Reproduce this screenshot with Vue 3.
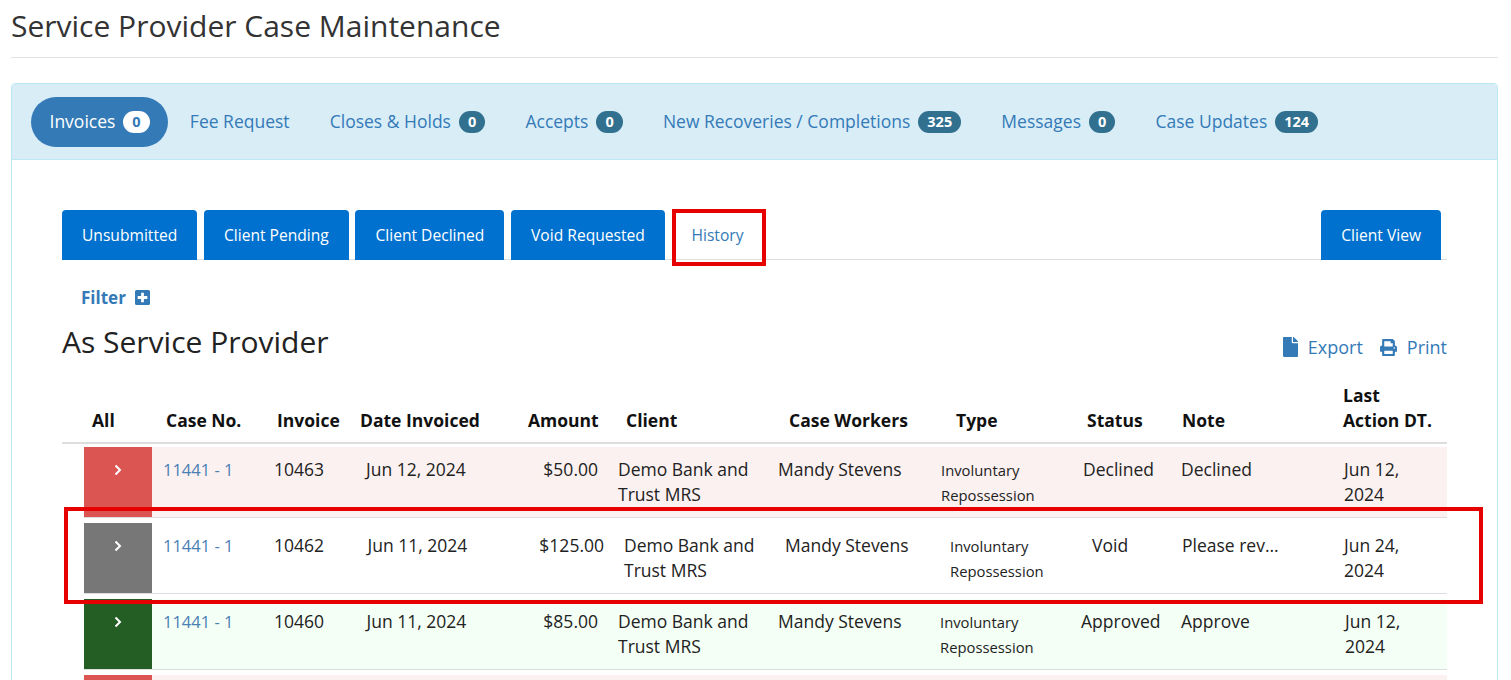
<script setup>
const nav = [
  { label: 'Invoices', count: '0', active: true },
  { label: 'Fee Request' },
  { label: 'Closes & Holds', count: '0' },
  { label: 'Accepts', count: '0' },
  { label: 'New Recoveries / Completions', count: '325' },
  { label: 'Messages', count: '0' },
  { label: 'Case Updates', count: '124' },
]
const tabs = ['Unsubmitted', 'Client Pending', 'Client Declined', 'Void Requested']
const headers = [
  { t: 'All', x: 30 }, { t: 'Case No.', x: 104 }, { t: 'Invoice', x: 215 }, { t: 'Date Invoiced', x: 298 },
  { t: 'Amount', x: 466 }, { t: 'Client', x: 564 }, { t: 'Case Workers', x: 727 }, { t: 'Type', x: 894 },
  { t: 'Status', x: 1025 }, { t: 'Note', x: 1120 }, { t: 'Last Action DT.', x: 1281 },
]
const rows = [
  { cls: 'red', cols: [100, 212, 304, 536, 556, 716, 879, 1021, 1119, 1282], inv: '10463', date: 'Jun 12, 2024', amt: '$50.00', status: 'Declined', note: 'Declined', last: 'Jun 12, 2024' },
  { cls: 'gray', cols: [100, 212, 305.500, 542, 562, 723, 888, 1030, 1120, 1282], inv: '10462', date: 'Jun 11, 2024', amt: '$125.00', status: 'Void', note: 'Please rev...', last: 'Jun 24, 2024' },
  { cls: 'green', cols: [100, 212, 304.500, 536, 556, 716, 878, 1019, 1119, 1283], inv: '10460', date: 'Jun 11, 2024', amt: '$85.00', status: 'Approved', note: 'Approve', last: 'Jun 12, 2024' },
]
function headTemplate(xs) {
  const out = []
  let prev = 30
  xs.forEach((x) => { out.push(`${x - prev}px`); prev = x })
  out.push('1fr')
  return out.join(' ')
}
function rowCols(r) {
  const [cs, inv, date, amtEnd, client, work, type, status, note, last] = r.cols
  const tracks = [68, inv - cs + 10, date - inv, 100, client - date - 100, work - client, type - work, status - type, note - status, last - note]
  return { gridTemplateColumns: tracks.map((t) => `${t}px`).join(' ') + ' 1fr' }
}
const headCols = { gridTemplateColumns: headTemplate(headers.slice(1).map((h) => h.x)) }
</script>

<template>
  <div class="page">
    <h1 class="title">Service Provider Case Maintenance</h1>
    <div class="panel">
      <ul class="nav">
        <li v-for="n in nav" :key="n.label" class="nav-item" :class="{ active: n.active }">
          <span>{{ n.label }}</span>
          <span v-if="n.count" class="badge">{{ n.count }}</span>
        </li>
      </ul>
      <div class="body">
        <div class="tabs">
          <span v-for="t in tabs" :key="t" class="tab">{{ t }}</span>
          <span class="tab-plain">History<i class="callout history-box"></i></span>
          <span class="tab view">Client View</span>
        </div>
        <div class="filter">
          <span>Filter</span>
          <svg class="plus" viewBox="1 1 14 14" width="15" height="15" aria-hidden="true">
            <path fill="#337ab7" d="M2.500 1h11A1.500 1.500 0 0 1 15 2.500v11a1.500 1.500 0 0 1-1.500 1.500h-11A1.500 1.500 0 0 1 1 13.500v-11A1.500 1.500 0 0 1 2.500 1z" />
            <path fill="#fff" d="M6.700 3.500h2.600v3.200h3.200v2.600H9.300v3.200H6.700V9.300H3.500V6.700h3.200z" />
          </svg>
        </div>
        <div class="section-head">
          <h2 class="subtitle">As Service Provider</h2>
          <div class="actions">
            <span class="action">
              <svg viewBox="0 0 384 512" width="15" height="20" aria-hidden="true"><path fill="#337ab7" d="M224 136V0H24C10.700 0 0 10.700 0 24v464c0 13.300 10.700 24 24 24h336c13.300 0 24-10.700 24-24V160H248c-13.200 0-24-10.800-24-24zm160-14.100v6.100H256V0h6.100c6.400 0 12.500 2.500 17 7l97.900 98c4.500 4.500 7 10.600 7 16.900z" /></svg>
              Export
            </span>
            <span class="action">
              <svg viewBox="0 0 512 512" width="17" height="17" aria-hidden="true"><path fill="#337ab7" d="M448 192V77.250c0-8.490-3.370-16.620-9.370-22.630L393.370 9.370c-6-6-14.140-9.370-22.630-9.370H96C78.330 0 64 14.330 64 32v160c-35.350 0-64 28.650-64 64v112c0 8.840 7.160 16 16 16h48v96c0 17.670 14.330 32 32 32h320c17.670 0 32-14.330 32-32v-96h48c8.840 0 16-7.160 16-16V256c0-35.350-28.650-64-64-64zm-64 256H128v-96h256v96zm0-224H128V64h192v48c0 8.840 7.160 16 16 16h48v96zm48 72c-13.250 0-24-10.750-24-24 0-13.260 10.750-24 24-24s24 10.740 24 24c0 13.250-10.750 24-24 24z" /></svg>
              Print
            </span>
          </div>
        </div>
        <div class="thead" :style="headCols">
          <span v-for="h in headers" :key="h.t" class="th" :class="{ narrow: h.t.startsWith('Last') }">{{ h.t }}</span>
        </div>
        <div class="rows">
          <div v-for="r in rows" :key="r.inv" class="row" :class="r.cls" :style="rowCols(r)">
            <span class="toggle">
              <svg viewBox="0 0 10 12" width="10" height="12" aria-hidden="true"><path d="M2.500 1.500 7 6l-4.500 4.500" fill="none" stroke="#fff" stroke-width="2" /></svg>
            </span>
            <span class="case">11441 - 1</span>
            <span>{{ r.inv }}</span>
            <span>{{ r.date }}</span>
            <span class="amt">{{ r.amt }}</span>
            <span class="client">Demo Bank and Trust MRS</span>
            <span>Mandy Stevens</span>
            <span class="type">Involuntary Repossession</span>
            <span>{{ r.status }}</span>
            <span>{{ r.note }}</span>
            <span class="last">{{ r.last }}</span>
            <i v-if="r.cls === 'gray'" class="callout row-box"></i>
          </div>
          <div class="row red tail"><span class="toggle"></span></div>
        </div>
      </div>
    </div>
  </div>
</template>

<style scoped>
.page {
  height: 680px;
  overflow: hidden;
  box-sizing: border-box;
  padding: 0 13px 0 11px;
  font-family: "Open Sans", "DejaVu Sans", sans-serif;
  color: #222;
  background: #fff;
}
.title {
  margin: 0 0 25px;
  height: 57px;
  border-bottom: 1px solid #e3e3e3;
  font-size: 30px;
  line-height: 51px;
  font-weight: 400;
  color: #333;
  white-space: nowrap;
}
.panel {
  height: 640px;
  border: 1px solid #bce8f1;
  border-radius: 4px 4px 0 0;
}
.nav {
  display: flex;
  align-items: center;
  height: 76px;
  margin: 0;
  padding: 0 0 0 19px;
  box-sizing: border-box;
  list-style: none;
  background: #d9edf7;
  border-bottom: 1px solid #bce8f1;
  gap: 3.200px;
}
.nav-item {
  display: flex;
  align-items: center;
  gap: 8px;
  height: 50px;
  padding: 0 18.500px 2px;
  box-sizing: border-box;
  font-size: 17.500px;
  color: #337ab7;
  border-radius: 25px;
  white-space: nowrap;
}
.nav-item.active {
  background: #337ab7;
  color: #fff;
}
.badge {
  padding: 0 9px;
  height: 22px;
  margin-top: 2px;
  line-height: 22px;
  border-radius: 11px;
  text-align: center;
  font-size: 14.500px;
  font-weight: 700;
  background: #31708f;
  color: #fff;
}
.active .badge {
  background: #fff;
  color: #337ab7;
}
.body {
  padding: 50px 50px 0;
  position: relative;
}
.tabs {
  display: flex;
  height: 50px;
  gap: 6.700px;
  box-sizing: border-box;
  border-bottom: 1px solid #ddd;
}
.tab {
  display: flex;
  align-items: center;
  height: 50px;
  padding: 0 20px;
  box-sizing: border-box;
  background: #0071ce;
  color: #fff;
  font-size: 15.600px;
  border-radius: 4px 4px 0 0;
  white-space: nowrap;
}
.tab-plain {
  position: relative;
  display: flex;
  align-items: center;
  padding: 0 20px;
  color: #337ab7;
  font-size: 15.600px;
}
.view {
  margin-left: auto;
  margin-right: 6px;
}
.callout {
  position: absolute;
  border: 4px solid #e60000;
  box-sizing: border-box;
  pointer-events: none;
  z-index: 2;
}
.history-box {
  left: 0;
  top: -1px;
  width: 94px;
  height: 57px;
}
.filter {
  display: flex;
  align-items: center;
  gap: 9px;
  height: 24px;
  margin: 25px 0 0 19px;
  font-size: 17px;
  font-weight: 700;
  color: #337ab7;
}
.section-head {
  display: flex;
  justify-content: space-between;
  align-items: flex-end;
  margin-top: 12px;
  height: 40px;
}
.subtitle {
  margin: 0;
  font-size: 30px;
  line-height: 38px;
  font-weight: 400;
  color: #222;
  white-space: nowrap;
}
.actions {
  display: flex;
  gap: 17px;
}
.action {
  display: flex;
  align-items: center;
  gap: 10px;
  font-size: 18px;
  color: #337ab7;
  height: 28px;
}
.thead {
  display: grid;
  align-items: end;
  padding-left: 30px;
  height: 61px;
  margin-top: 22px;
  box-sizing: border-box;
  border-bottom: 2px solid #ddd;
  padding-bottom: 9px;
  font-size: 17.500px;
  font-weight: 700;
  line-height: 25px;
  color: #111;
}
.th {
  white-space: nowrap;
}
.th.narrow {
  width: 95px;
  white-space: normal;
}
.rows {
  display: flex;
  flex-direction: column;
  gap: 5px;
  margin-top: 3px;
  margin-left: 22px;
}
.row {
  position: relative;
  display: grid;
  height: 71px;
  box-sizing: border-box;
  border-bottom: 1px solid #ddd;
  font-size: 17.500px;
  line-height: 25px;
  color: #222;
}
.row > span:not(.toggle) {
  padding-top: 10px;
  min-width: 0;
}
.red { background: #fbf1f0; }
.green { background: #f4fff5; }
.gray { background: #fff; }
.toggle {
  display: flex;
  justify-content: center;
  align-items: flex-start;
  padding-top: 17px;
  box-sizing: border-box;
}
.red .toggle { background: #db5652; }
.gray .toggle { background: #777; }
.green .toggle { background: #245e24; }
.row > .case {
  color: #4a7fb5;
  font-size: 16.500px;
  padding-left: 11px;
}
.row > .amt {
  text-align: right;
  padding-right: 20px;
}
.client {
  padding-right: 6px;
}
.row > span.type {
  font-size: 14.800px;
  padding: 11px 10px 0 0;
}
.last {
  width: 85px;
}
.row-box {
  left: -20px;
  top: -16px;
  width: 1419px;
  height: 97px;
}
.row.tail {
  grid-template-columns: 68px 1fr;
}
</style>
